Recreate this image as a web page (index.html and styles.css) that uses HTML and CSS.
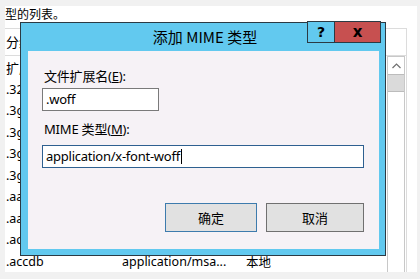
FILE: index.html
```html
<!DOCTYPE html>
<html lang="zh-CN">
<head>
<meta charset="utf-8">
<link rel="stylesheet" href="styles.css">
</head>
<body>
<div class="panel">
  <div class="intro">型的列表。</div>
  <div class="listframe">
    <div class="groupbar">分组依据: 不进行分组</div>
    <div class="listbody">
      <div class="rows">
        <div class="row colhead"><span class="c1">扩展名</span><span class="c2">MIME 类型</span><span class="c3">条目类型</span></div>
        <div class="row"><span class="c1">.323</span><span class="c2">text/h323</span><span class="c3">本地</span></div>
        <div class="row"><span class="c1">.3g2</span><span class="c2">video/3gpp2</span><span class="c3">本地</span></div>
        <div class="row"><span class="c1">.3gp</span><span class="c2">video/3gpp</span><span class="c3">本地</span></div>
        <div class="row"><span class="c1">.3gp2</span><span class="c2">video/3gpp2</span><span class="c3">本地</span></div>
        <div class="row"><span class="c1">.3gpp</span><span class="c2">video/3gpp</span><span class="c3">本地</span></div>
        <div class="row"><span class="c1">.aac</span><span class="c2">audio/aac</span><span class="c3">本地</span></div>
        <div class="row"><span class="c1">.aaf</span><span class="c2">application/oct...</span><span class="c3">本地</span></div>
        <div class="row"><span class="c1">.aca</span><span class="c2">application/oct...</span><span class="c3">本地</span></div>
        <div class="row"><span class="c1">.accdb</span><span class="c2">application/msa...</span><span class="c3">本地</span></div>
      </div>
      <div class="scrollbar">
        <div class="sb-up"><svg width="9" height="6" viewBox="0 0 9 6"><path d="M0.5 5 L4.5 1 L8.5 5" fill="none" stroke="#707070" stroke-width="1.2"/></svg></div>
        <div class="sb-thumb"></div>
      </div>
    </div>
  </div>
</div>

<div class="dialog">
  <div class="titlebar">
    <span class="title">添加 MIME 类型</span>
    <div class="tb-buttons">
      <div class="tb-help">?</div>
      <div class="tb-close">x</div>
    </div>
  </div>
  <div class="content">
    <label class="lbl">文件扩展名(<u>E</u>):</label>
    <div class="input short">.woff</div>
    <label class="lbl lbl2">MIME 类型(<u>M</u>):</label>
    <div class="input long focus">application/x-font-woff<span class="caret"></span></div>
    <div class="btnrow">
      <div class="btn primary">确定</div>
      <div class="btn cancel">取消</div>
    </div>
  </div>
</div>
</body>
</html>
```
FILE: styles.css
```css
html, body {
  margin: 0;
  padding: 0;
}
body {
  width: 420px;
  height: 279px;
  background: #f1f1f1;
  overflow: hidden;
  font-family: "Noto Sans", "Noto Sans CJK SC", sans-serif;
  font-size: 13px;
  color: #000;
  position: relative;
}
.panel {
  margin: 6px 3px 0 5px;
  height: 266px;
  background: #fff;
  display: flex;
  flex-direction: column;
  overflow: hidden;
}
.intro {
  font-size: 12px;
  line-height: 16px;
  height: 24px;
  font-family: "Noto Sans CJK SC", sans-serif;
}
.listframe {
  width: 401px;
  flex: 1;
  border-top: 1px solid #dcdcdc;
  border-right: 1px solid #dcdcdc;
  display: flex;
  flex-direction: column;
}
.groupbar {
  height: 26px;
  line-height: 26px;
  padding-left: 1px;
  border-bottom: 1px solid #dcdcdc;
  font-family: "Noto Sans CJK SC", sans-serif;
  white-space: nowrap;
}
.listbody {
  flex: 1;
  display: flex;
}
.rows {
  flex: 1;
  padding-top: 1px;
  font-size: 12.5px;
}
.row {
  height: 21.5px;
  line-height: 21.5px;
  display: flex;
  white-space: nowrap;
}
.c1 { width: 116px; padding-left: 1px; }
.c2 { width: 124px; overflow: hidden; }
.c3 { font-family: "Noto Sans CJK SC", sans-serif; }
.colhead { font-family: "Noto Sans CJK SC", sans-serif; font-size: 13px; }
.scrollbar {
  width: 16px;
  margin-right: 1px;
  border-left: 1px solid #c8c8c8;
  border-right: 1px solid #c8c8c8;
  background: #fff;
  display: flex;
  flex-direction: column;
}
.sb-up {
  height: 17px;
  border-top: 1px solid #c8c8c8;
  display: flex;
  align-items: center;
  justify-content: center;
}
.sb-thumb {
  height: 16px;
  background: #dadada;
  border-top: 1px solid #bcbcbc;
  border-bottom: 1px solid #bcbcbc;
}

/* dialog overlay */
.dialog {
  position: absolute;
  left: 20px;
  top: 22px;
  width: 364px;
  height: 232px;
  border: 1px solid #2b3a44;
  background: #62c9ef;
  display: flex;
  flex-direction: column;
}
.titlebar {
  height: 28px;
  position: relative;
  display: flex;
  align-items: center;
  justify-content: center;
}
.title {
  font-family: "Noto Sans CJK SC", "Noto Sans", sans-serif;
  font-size: 15px;
  line-height: 20px;
  margin-left: 4px;
}
.tb-buttons {
  position: absolute;
  top: -2px;
  right: 4px;
  display: flex;
}
.tb-help, .tb-close {
  height: 20px;
  border: 1px solid #2b3a44;
  display: flex;
  align-items: center;
  justify-content: center;
  font-family: "DejaVu Sans", sans-serif;
  font-weight: bold;
}
.tb-help {
  width: 26px;
  background: #62c9ef;
  font-size: 14px;
}
.tb-close {
  width: 45px;
  margin-left: -1px;
  background: #c75050;
  font-size: 15px;
  line-height: 16px;
}
.content {
  margin: 0 6px 6px 7px;
  flex: 1;
  background: #f6f2f6;
  padding: 16px 0 0 14px;
  display: flex;
  flex-direction: column;
  align-items: flex-start;
}
.lbl {
  line-height: 18px;
  margin-left: 2px;
  letter-spacing: -0.2px;
}
.lbl2 { margin-top: 9px; }
.input {
  margin-top: 3px;
  height: 21px;
  line-height: 21px;
  background: #fff;
  border: 1px solid #7a7a7a;
  padding-left: 3px;
  box-sizing: content-box;
  white-space: nowrap;
  letter-spacing: -0.25px;
}
.short { width: 112px; }
.long { width: 317px; margin-top: 7px; }
.focus { border-color: #2e6090; }
.caret {
  display: inline-block;
  width: 1px;
  height: 15px;
  background: #000;
  vertical-align: -3px;
  margin-left: 1px;
}
.btnrow {
  margin-top: 35px;
  align-self: stretch;
  display: flex;
  justify-content: flex-end;
  gap: 9px;
  padding-right: 15px;
}
.btn {
  height: 27px;
  line-height: 27px;
  background: #e1e1e1;
  border: 1px solid #707070;
  text-align: center;
  font-family: "Noto Sans CJK SC", sans-serif;
}
.primary { width: 90px; border-color: #3d7bad; }
.cancel { width: 96px; }
```
